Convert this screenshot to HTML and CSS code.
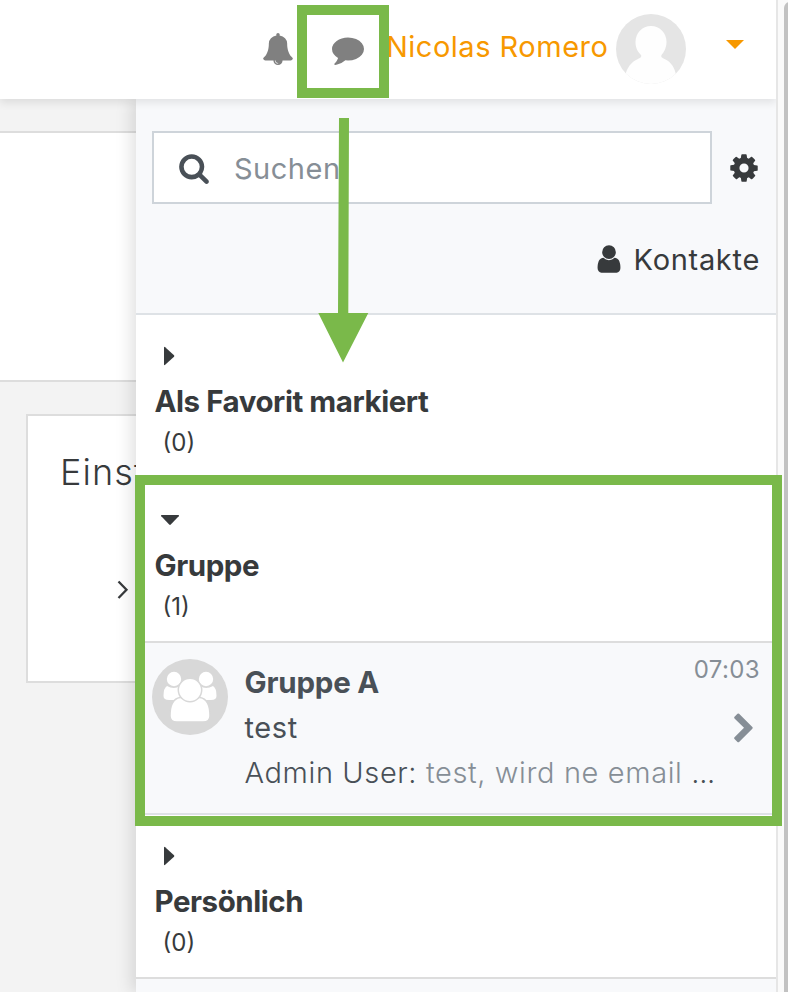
FILE: index.html
```html
<!DOCTYPE html>
<html lang="de">
<head>
<meta charset="utf-8">
<title>Mitteilungen</title>
<link rel="stylesheet" href="styles.css">
</head>
<body>
<div class="window">
  <div class="app">
    <header class="topbar">
      <svg class="icon bell" viewBox="0 0 1792 1792"><path d="M912 1696q0-16-16-16-59 0-101.500-42.500t-42.500-101.500q0-16-16-16t-16 16q0 73 51.500 124.500t124.500 51.500q16 0 16-16zm816-288q0 52-38 90t-90 38h-448q0 106-75 181t-181 75-181-75-75-181h-448q-52 0-90-38t-38-90q50-42 91-88t85-119.500 74.500-158.500 50-206 19.500-260q0-152 117-282.500t307-158.500q-8-19-8-39 0-40 28-68t68-28 68 28 28 68q0 20-8 39 190 28 307 158.500t117 282.500q0 139 19.500 260t50 206 74.500 158.500 85 119.500 91 88z"/></svg>
      <svg class="icon comment" viewBox="0 0 1792 1792"><path d="M1792 896q0 174-120 321.500t-326 233-450 85.500q-70 0-145-8-198 175-460 242-49 14-114 22-17 2-30.500-9t-17.500-29v-1q-3-4-.5-12t2-10 4.500-9.500l6-9 7-8.500 8-9q7-8 31-34.500t34.500-38 31-39.500 32.500-51 27-59 26-76q-157-89-247.500-220t-90.500-281q0-130 71-248.500t191-204.500 286-136.500 348-50.500q244 0 450 85.500t326 233 120 321.500z"/></svg>
      <span class="username">Nicolas Romero</span>
      <svg class="avatar" viewBox="0 0 70 70"><defs><clipPath id="round"><circle cx="35" cy="35" r="35"/></clipPath></defs><g clip-path="url(#round)"><rect width="70" height="70" fill="#e5e5e5"/><path fill="#fefefe" d="M35 12c9 0 15.500 7 15.500 16 0 6-3 11-5 13-1 2 1 3 3 4 7 3 10.500 9 12 18v7H9v-7c1.500-9 6-15 13-18 2-1 4-2 3-4-3-3-5.500-7-5.500-13 0-9 6.500-16 15.500-16z"/></g></svg>
      <span class="caret"></span>
    </header>
    <div class="content">
      <main class="page">
        <section class="banner"></section>
        <section class="card">
          <h2>Einst</h2>
          <svg class="arrow" viewBox="0 0 12 20"><path d="M1.500 1.500L9.500 9.700L1.500 18"/></svg>
        </section>
      </main>
      <aside class="drawer">
        <div class="tools">
          <div class="search-row">
            <div class="search">
              <svg class="icon" viewBox="0 0 1792 1792"><path d="M1216 832q0-185-131.500-316.500t-316.500-131.500-316.500 131.500-131.500 316.500 131.500 316.500 316.500 131.500 316.500-131.500 131.500-316.500zm512 832q0 52-38 90t-90 38q-54 0-90-38l-343-342q-179 124-399 124-143 0-273.500-55.500t-225-150-150-225-55.500-273.500 55.500-273.500 150-225 225-150 273.500-55.500 273.500 55.500 225 150 150 225 55.500 273.500q0 220-124 399l343 343q37 37 37 90z"/></svg>
              <span>Suchen</span>
            </div>
            <svg class="icon" viewBox="0 0 1792 1792"><path d="M1152 896q0-106-75-181t-181-75-181 75-75 181 75 181 181 75 181-75 75-181zm512-109v222q0 12-8 23t-20 13l-185 28q-19 54-39 91 35 50 107 138 10 12 10 25t-9 23q-27 37-99 108t-94 71q-12 0-26-9l-138-108q-44 23-91 38-16 136-29 186-7 28-36 28h-222q-14 0-24.500-8.500t-11.500-21.500l-28-184q-49-16-90-37l-141 107q-10 9-25 9-14 0-25-11-126-114-165-168-7-10-7-23 0-12 8-23 15-21 51-66.500t54-70.500q-27-50-41-99l-183-27q-13-2-21-12.500t-8-23.500v-222q0-12 8-23t19-13l186-28q14-46 39-92-40-57-107-138-10-12-10-24 0-10 9-23 26-36 98.500-107.500t94.500-71.500q13 0 26 10l138 107q44-23 91-38 16-136 29-186 7-28 36-28h222q14 0 24.500 8.500t11.500 21.500l28 184q49 16 90 37l142-107q9-9 24-9 13 0 25 10 129 119 165 170 7 8 7 22 0 12-8 23-15 21-51 66.500t-54 70.500q26 50 41 98l183 28q13 2 21 12.500t8 23.500z"/></svg>
          </div>
          <div class="contacts">
            <svg class="icon" viewBox="0 0 1792 1792"><path d="M1536 1399q0 109-62.500 187t-150.500 78h-854q-88 0-150.500-78t-62.500-187q0-85 8.500-160.500t31.500-152 58.500-131 94-89 134.500-34.500q131 128 313 128t313-128q76 0 134.500 34.500t94 89 58.500 131 31.500 152 8.500 160.500zm-256-887q0 159-112.500 271.500t-271.500 112.500-271.500-112.500-112.500-271.500 112.500-271.500 271.500-112.500 271.500 112.500 112.500 271.500z"/></svg>
            <span>Kontakte</span>
          </div>
        </div>
        <section class="group">
          <svg class="toggle" viewBox="0 0 20 20"><path d="M4 1.500Q4 .3 5.200 1.200L14 9.200Q14.800 10 14 10.800L5.200 18.800Q4 19.700 4 18.500Z"/></svg>
          <h3>Als Favorit markiert</h3>
          <span class="count">(0)</span>
        </section>
        <section class="group">
          <svg class="toggle" viewBox="0 0 20 20"><path d="M1.800 5H18.200Q19.700 5 18.700 6.200L10.800 14.500Q10 15.300 9.200 14.500L1.300 6.200Q.3 5 1.800 5Z"/></svg>
          <h3>Gruppe</h3>
          <span class="count">(1)</span>
        </section>
        <div class="conversation">
          <svg class="group-avatar" viewBox="0 0 76 76">
            <circle cx="38" cy="38" r="38" fill="#d8d8d8"/>
            <g fill="#fff">
              <path d="M15 27Q22 31 28 27V41H17Q11.500 41 11.500 37Q11.500 29 15 27ZM61 27Q54 31 48 27V41H59Q64.500 41 64.500 37Q64.500 29 61 27Z"/>
              <circle cx="22" cy="20" r="7.200"/><circle cx="54" cy="20" r="7.200"/>
            </g>
            <g fill="#fff" stroke="#d8d8d8" stroke-width="1.500">
              <path d="M28 38.500H48Q58 40 58 57Q58 63 51 63H25Q18 63 18 57Q18 40 28 38.500Z"/>
              <circle cx="38" cy="31" r="11.700"/>
            </g>
          </svg>
          <div class="message">
            <div class="heading"><strong>Gruppe A</strong><time>07:03</time></div>
            <div class="subject"><span>test</span>
              <svg class="icon" viewBox="0 0 1792 1792"><path d="M1363 877l-742 742q-19 19-45 19t-45-19l-166-166q-19-19-19-45t19-45l531-531-531-531q-19-19-19-45t19-45l166-166q19-19 45-19t45 19l742 742q19 19 19 45t-19 45z"/></svg>
            </div>
            <div class="preview">Admin User: <span>test, wird ne email</span> <b>...</b></div>
          </div>
        </div>
        <section class="group">
          <svg class="toggle" viewBox="0 0 20 20"><path d="M4 1.500Q4 .3 5.200 1.200L14 9.200Q14.800 10 14 10.800L5.200 18.800Q4 19.700 4 18.500Z"/></svg>
          <h3>Persönlich</h3>
          <span class="count">(0)</span>
        </section>
      </aside>
    </div>
  </div>
  <div class="scrollbar"><div class="thumb"></div></div>
  <svg class="annotations" viewBox="0 0 788 992">
    <rect x="302" y="10" width="82" height="83"/>
    <rect x="140" y="480" width="637" height="341"/>
    <path d="M339 118H349L348.300 313H368.300L343 362.500L318.300 313H338Z"/>
  </svg>
</div>
</body>
</html>
```
FILE: styles.css
```css
* { box-sizing: border-box; }
body {
  margin: 0;
  font-family: Inter, "Liberation Sans", sans-serif;
  font-size: 29px;
  font-weight: 300;
  color: #373a3c;
}
h2, h3 { margin: 0; }
svg { display: block; flex: none; }
.icon { width: 32px; height: 32px; fill: currentColor; }
.window { position: relative; display: flex; width: 788px; height: 992px; overflow: hidden; }
.app { display: flex; flex-direction: column; width: 776px; overflow: hidden; }
.topbar {
  position: relative;
  z-index: 2;
  flex: none;
  display: flex;
  align-items: flex-start;
  height: 99px;
  padding-left: 262px;
  background: #fff;
  box-shadow: 0 4px 8px rgba(0, 0, 0, .09);
}
.bell, .comment { margin-top: 33px; color: #808080; }
.comment { margin-left: 38px; }
.username {
  width: 230px;
  margin: 29px 0 0 22px;
  line-height: 36px;
  font-weight: 400;
  letter-spacing: .5px;
  white-space: nowrap;
  color: #f79800;
}
.avatar { width: 70px; height: 70px; margin-top: 14px; }
.caret {
  margin: 40px 0 0 40px;
  border: solid transparent;
  border-width: 9px 9px 0;
  border-top-color: #f79800;
}
.content { display: flex; flex: 1; min-height: 0; }
.page {
  width: 136px;
  padding-top: 32px;
  background: #f3f3f3;
  overflow: hidden;
}
.banner { height: 251px; border: solid #ddd; border-width: 2px 0; background: #fff; }
.card {
  width: 700px;
  height: 269px;
  margin: 32px 0 0 26px;
  padding: 33px 32px;
  border: 2px solid #ddd;
  background: #fff;
}
.card h2 { font-size: 36px; font-weight: 300; line-height: 46px; letter-spacing: 1.100px; }
.arrow { width: 12px; height: 20px; margin: 85px 0 0 57px; fill: none; stroke: #373a3c; stroke-width: 2.300; }
.drawer {
  position: relative;
  width: 640px;
  background: #f8f9fb;
  box-shadow: -4px 0 16px rgba(0, 0, 0, .13);
}
.tools { height: 216px; padding: 32px 16px 0; border-bottom: 2px solid #dee2e6; }
.search-row { display: flex; align-items: center; gap: 16px; }
.search {
  display: flex;
  align-items: center;
  gap: 24px;
  width: 560px;
  height: 73px;
  padding-left: 24px;
  border: 2px solid #ced4da;
  background: #fff;
  color: #495057;
}
.search span { padding-top: 2px; color: #868e96; font-weight: 380; letter-spacing: .5px; }
.contacts {
  display: flex;
  align-items: center;
  justify-content: flex-end;
  gap: 9px;
  margin-top: 37px;
  line-height: 38px;
  font-weight: 370;
  letter-spacing: .7px;
}
.contacts .icon { margin-top: -2px; }
.group { height: 164px; padding: 30.500px 18.500px 0; border-bottom: 2px solid #ddd; background: #fff; }
.toggle { width: 20px; height: 20px; margin-left: 5.500px; fill: #373a3c; }
.group h3 { margin-top: 17.500px; font-size: 29.500px; font-weight: 700; line-height: 36px; letter-spacing: -.45px; }
.count { display: block; margin: 9px 0 0 8px; font-size: 24px; font-weight: 370; line-height: 30px; }
.conversation {
  display: flex;
  height: 172px;
  padding: 16px 16px 0;
  border-bottom: 2px solid #dee2e6;
  color: #495057;
}
.group-avatar { width: 76px; height: 76px; }
.message { flex: 1; margin-left: 16.500px; white-space: nowrap; }
.heading, .subject { display: flex; justify-content: space-between; height: 45px; line-height: 48px; }
.heading strong { font-size: 29.500px; font-weight: 700; line-height: 46px; letter-spacing: -.2px; }
.heading time { font-size: 24px; line-height: 22px; font-weight: 370; letter-spacing: .4px; color: #868e96; }
.subject { font-weight: 370; letter-spacing: .6px; }
.subject .icon { margin-top: 8.500px; color: #868e96; }
.preview { line-height: 48px; letter-spacing: .62px; }
.preview span { color: #868e96; }
.preview b { font-weight: 300; letter-spacing: -.3px; }
.scrollbar { width: 12px; padding: 2px 0 0 6px; border-left: 2px solid #e6e6e6; background: #fafafa; }
.thumb { width: 12px; height: 1100px; border-radius: 7px; background: #c2c2c2; }
.annotations { position: absolute; z-index: 3; inset: 0; width: 788px; height: 992px; fill: #7ab94a; }
.annotations rect { fill: none; stroke: #7ab94a; stroke-width: 10; }
```
